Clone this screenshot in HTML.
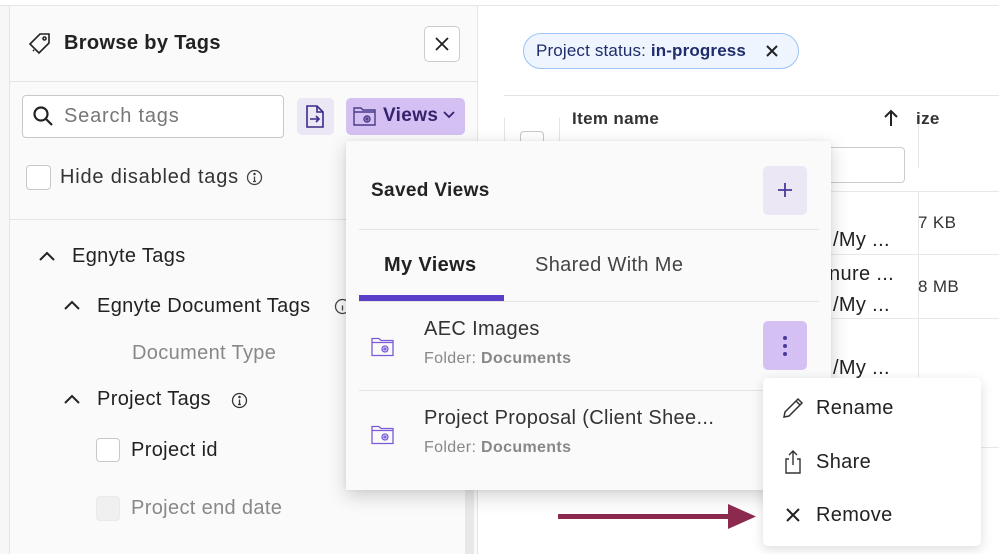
<!DOCTYPE html>
<html><head><meta charset="utf-8"><style>
*{box-sizing:border-box;margin:0;padding:0}
body{width:999px;height:554px;overflow:hidden;background:#fff;font-family:"Liberation Sans",sans-serif;color:#222;position:relative}
.a{position:absolute}
.t{position:absolute;white-space:nowrap;letter-spacing:.35px}
</style></head><body>
<div class="a" style="left:0;top:0;width:999px;height:6px;background:#fff;border-bottom:1px solid #e6e6e6"></div>
<div class="a" style="left:0;top:6px;width:10px;height:548px;background:#f7f7f7;border-right:1px solid #e4e4e4"></div>
<div class="a" style="left:10px;top:6px;width:468px;height:548px;background:#fafafa;border-right:1px solid #e4e4e4"></div>
<div class="a" style="left:10px;top:81px;width:468px;height:1px;background:#e4e4e4"></div>
<div class="a" style="left:10px;top:219px;width:468px;height:1px;background:#e4e4e4"></div>
<div class="a" style="left:465px;top:480px;width:9px;height:74px;background:#e8e8e8"></div>
<svg class="a" style="left:27px;top:31px" width="26" height="26" viewBox="0 0 26 26" fill="none" stroke="#222" stroke-width="1.6"><path d="M3 13 L13 3 L22 3 L22 12 L12 22 Z"/><circle cx="17.5" cy="7.5" r="1.5"/><path d="M6 19 L7 20"/></svg>
<div class="t" style="left:64px;top:32px;font-size:20px;font-weight:bold;color:#222">Browse by Tags</div>
<div class="a" style="left:424px;top:26px;width:36px;height:36px;border:1px solid #ccc;border-radius:5px;background:#fff"></div>
<svg class="a" style="left:432px;top:34px" width="20" height="20" viewBox="0 0 20 20" stroke="#222" stroke-width="1.8"><path d="M4 4 L16 16 M16 4 L4 16"/></svg>
<div class="a" style="left:22px;top:95px;width:262px;height:43px;border:1px solid #c8c8c8;border-radius:4px;background:#fff"></div>
<svg class="a" style="left:32px;top:105px" width="22" height="22" viewBox="0 0 22 22" fill="none" stroke="#222" stroke-width="2.2"><circle cx="9" cy="9" r="6.5"/><path d="M14 14 L20 20"/></svg>
<div class="t" style="left:64px;top:105px;font-size:20px;color:#777;letter-spacing:.8px">Search tags</div>
<div class="a" style="left:297px;top:98px;width:37px;height:37px;background:#ebe7f5;border-radius:5px"></div>
<svg class="a" style="left:304px;top:104px" width="22" height="26" viewBox="0 0 22 26" fill="none" stroke="#3b2a8a" stroke-width="1.6"><path d="M3 2 H13 L19 8 V23 H3 Z M13 2 V8 H19"/><path d="M6 15 H15 M12 12 L15 15 L12 18"/></svg>
<div class="a" style="left:346px;top:98px;width:119px;height:37px;background:#d4c0f3;border-radius:5px"></div>
<svg class="a" style="left:353px;top:105px" width="24" height="22" viewBox="0 0 24 22" fill="none" stroke="#4a3a8a" stroke-width="1.4"><path d="M1 3 H8 L10 5 H22 V20 H1 Z M1 7 H22"/><circle cx="14" cy="14" r="3"/><circle cx="14" cy="14" r="1"/></svg>
<div class="t" style="left:383px;top:105px;font-size:19px;font-weight:bold;color:#34236e">Views</div>
<svg class="a" style="left:442px;top:110px" width="14" height="10" viewBox="0 0 14 10" fill="none" stroke="#34236e" stroke-width="1.8"><path d="M2 2 L7 7 L12 2"/></svg>
<div class="a" style="left:26px;top:165px;width:25px;height:25px;border:1px solid #c8c8c8;border-radius:4px;background:#fff"></div>
<div class="t" style="left:60px;top:166px;font-size:20px;color:#333;letter-spacing:.8px">Hide disabled tags</div>
<svg class="a" style="left:246px;top:169px" width="17" height="17" viewBox="0 0 17 17" fill="none" stroke="#444" stroke-width="1.3"><circle cx="8.5" cy="8.5" r="7"/><path d="M8.5 7.5 V12.5 M7 12.5 H10"/><circle cx="8.5" cy="5" r=".6" fill="#444"/></svg>
<svg class="a" style="left:38px;top:250px" width="18" height="12" viewBox="0 0 18 12" fill="none" stroke="#222" stroke-width="2"><path d="M2 10 L9 3 L16 10"/></svg>
<div class="t" style="left:72px;top:245px;font-size:20px;color:#222">Egnyte Tags</div>
<svg class="a" style="left:63px;top:299px" width="18" height="12" viewBox="0 0 18 12" fill="none" stroke="#222" stroke-width="2"><path d="M2 10 L9 3 L16 10"/></svg>
<div class="t" style="left:97px;top:295px;font-size:20px;color:#222">Egnyte Document Tags</div>
<svg class="a" style="left:334px;top:298px" width="17" height="17" viewBox="0 0 17 17" fill="none" stroke="#444" stroke-width="1.3"><circle cx="8.5" cy="8.5" r="7"/><path d="M8.5 7.5 V12.5"/></svg>
<div class="t" style="left:132px;top:342px;font-size:20px;color:#888">Document Type</div>
<svg class="a" style="left:63px;top:393px" width="18" height="12" viewBox="0 0 18 12" fill="none" stroke="#222" stroke-width="2"><path d="M2 10 L9 3 L16 10"/></svg>
<div class="t" style="left:97px;top:388px;font-size:20px;color:#222">Project Tags</div>
<svg class="a" style="left:231px;top:392px" width="17" height="17" viewBox="0 0 17 17" fill="none" stroke="#333" stroke-width="1.3"><circle cx="8.5" cy="8.5" r="7"/><path d="M8.5 7.5 V12.5 M7 12.5 H10"/><circle cx="8.5" cy="5" r=".6" fill="#333"/></svg>
<div class="a" style="left:96px;top:438px;width:24px;height:24px;border:1px solid #c8c8c8;border-radius:4px;background:#fff"></div>
<div class="t" style="left:131px;top:439px;font-size:20px;color:#222">Project id</div>
<div class="a" style="left:96px;top:496px;width:24px;height:25px;border-radius:4px;background:#f0f0f0;border:1px solid #eaeaea"></div>
<div class="t" style="left:131px;top:497px;font-size:20px;color:#888">Project end date</div>
<div class="a" style="left:523px;top:33px;width:276px;height:36px;border:1px solid #9cc3f5;border-radius:18px;background:#eef5ff"></div>
<div class="t" style="left:536px;top:41px;font-size:17px;color:#1f2d6b;letter-spacing:.15px">Project status: <b>in-progress</b></div>
<svg class="a" style="left:764px;top:43px" width="16" height="16" viewBox="0 0 16 16" stroke="#222" stroke-width="2"><path d="M3 3 L13 13 M13 3 L3 13"/></svg>
<div class="a" style="left:504px;top:95px;width:495px;height:1px;background:#e4e4e4"></div>
<div class="a" style="left:504px;top:118px;width:1px;height:30px;background:#e4e4e4"></div>
<div class="a" style="left:520px;top:131px;width:24px;height:14px;border:1px solid #c8c8c8;border-radius:4px;border-bottom:none"></div>
<div class="a" style="left:559px;top:118px;width:1px;height:30px;background:#e4e4e4"></div>
<div class="t" style="left:572px;top:109px;font-size:17px;font-weight:bold;color:#333">Item name</div>
<svg class="a" style="left:882px;top:108px" width="18" height="20" viewBox="0 0 18 20" fill="none" stroke="#222" stroke-width="2"><path d="M9 18 V3 M3 9 L9 3 L15 9"/></svg>
<div class="a" style="left:918px;top:118px;width:1px;height:50px;background:#e4e4e4"></div>
<div class="t" style="left:916px;top:109px;font-size:17px;font-weight:bold;color:#333">ize</div>
<div class="a" style="left:800px;top:147px;width:105px;height:36px;border:1px solid #ccc;border-radius:4px;background:#fff"></div>
<div class="a" style="left:800px;top:191px;width:199px;height:1px;background:#e8e8e8"></div>
<div class="a" style="left:800px;top:254px;width:199px;height:1px;background:#e8e8e8"></div>
<div class="a" style="left:800px;top:318px;width:199px;height:1px;background:#e8e8e8"></div>
<div class="a" style="left:800px;top:447px;width:199px;height:1px;background:#e8e8e8"></div>
<div class="a" style="left:918px;top:191px;width:1px;height:186px;background:#e8e8e8"></div>
<div class="t" style="left:918px;top:213px;font-size:17px;color:#333">7 KB</div>
<div class="t" style="left:918px;top:277px;font-size:17px;color:#333">8 MB</div>
<div class="t" style="left:833px;top:229px;font-size:20px;color:#222">/My ...</div>
<div class="t" style="left:829px;top:263px;font-size:20px;color:#222">nure ...</div>
<div class="t" style="left:833px;top:294px;font-size:20px;color:#222">/My ...</div>
<div class="t" style="left:833px;top:357px;font-size:20px;color:#222">/My ...</div>
<div class="a" style="left:346px;top:141px;width:485px;height:349px;background:#fafafa;box-shadow:0 6px 18px rgba(0,0,0,.18),0 0 4px rgba(0,0,0,.06)"></div>
<div class="t" style="left:371px;top:180px;font-size:19px;font-weight:bold;color:#222">Saved Views</div>
<div class="a" style="left:763px;top:166px;width:44px;height:49px;background:#ebe7f5;border-radius:5px"></div>
<svg class="a" style="left:775px;top:180px" width="20" height="20" viewBox="0 0 20 20" stroke="#4a3a9a" stroke-width="1.8"><path d="M10 3 V17 M3 10 H17"/></svg>
<div class="a" style="left:359px;top:229px;width:460px;height:1px;background:#e4e4e4"></div>
<div class="t" style="left:384px;top:254px;font-size:20px;font-weight:bold;color:#222">My Views</div>
<div class="t" style="left:535px;top:254px;font-size:20px;color:#444">Shared With Me</div>
<div class="a" style="left:359px;top:301px;width:460px;height:1px;background:#e4e4e4"></div>
<div class="a" style="left:359px;top:295px;width:145px;height:6px;background:#5a3fc8"></div>
<svg class="a" style="left:371px;top:337px" width="24" height="20" viewBox="0 0 24 20" fill="none" stroke="#7b5ad8" stroke-width="1.3"><path d="M1 1.5 H8 L10 3.5 H22 V18.5 H1 Z M1 5.5 H22"/><circle cx="14" cy="12" r="3"/><circle cx="14" cy="12" r="1"/></svg>
<div class="t" style="left:424px;top:318px;font-size:20px;color:#333">AEC Images</div>
<div class="t" style="left:424px;top:350px;font-size:16px;color:#888">Folder: <b>Documents</b></div>
<div class="a" style="left:763px;top:321px;width:44px;height:49px;background:#d4c0f3;border-radius:5px"></div>
<svg class="a" style="left:780px;top:334px" width="10" height="24" viewBox="0 0 10 24" fill="#4a3a9a"><circle cx="5" cy="4" r="2"/><circle cx="5" cy="12" r="2"/><circle cx="5" cy="20" r="2"/></svg>
<div class="a" style="left:359px;top:390px;width:460px;height:1px;background:#e4e4e4"></div>
<svg class="a" style="left:371px;top:425px" width="24" height="20" viewBox="0 0 24 20" fill="none" stroke="#7b5ad8" stroke-width="1.3"><path d="M1 1.5 H8 L10 3.5 H22 V18.5 H1 Z M1 5.5 H22"/><circle cx="14" cy="12" r="3"/><circle cx="14" cy="12" r="1"/></svg>
<div class="t" style="left:424px;top:407px;font-size:20px;color:#333">Project Proposal (Client Shee...</div>
<div class="t" style="left:424px;top:439px;font-size:16px;color:#888">Folder: <b>Documents</b></div>
<div class="a" style="left:763px;top:378px;width:218px;height:168px;background:#fff;border-radius:5px;box-shadow:0 3px 12px rgba(0,0,0,.14)"></div>
<svg class="a" style="left:781px;top:396px" width="24" height="24" viewBox="0 0 24 24" fill="none" stroke="#333" stroke-width="1.5"><path d="M3 21 L4 16 L17 3 L21 7 L8 20 Z M15 5 L19 9"/></svg>
<div class="t" style="left:816px;top:397px;font-size:20px;color:#222">Rename</div>
<svg class="a" style="left:783px;top:449px" width="20" height="26" viewBox="0 0 20 26" fill="none" stroke="#333" stroke-width="1.4"><path d="M10 16 V2 M6 6 L10 2 L14 6 M6 10 H3 V24 H17 V10 H14"/></svg>
<div class="t" style="left:816px;top:451px;font-size:20px;color:#222">Share</div>
<svg class="a" style="left:784px;top:506px" width="18" height="18" viewBox="0 0 18 18" stroke="#222" stroke-width="2"><path d="M3 3 L15 15 M15 3 L3 15"/></svg>
<div class="t" style="left:816px;top:504px;font-size:20px;color:#222">Remove</div>
<div class="a" style="left:558px;top:514px;width:178px;height:5px;background:#8b2a4e"></div>
<svg class="a" style="left:728px;top:504px" width="28" height="25" viewBox="0 0 28 25"><path d="M0 0 L28 12.5 L0 25 Z" fill="#8b2a4e"/></svg>
</body></html>
